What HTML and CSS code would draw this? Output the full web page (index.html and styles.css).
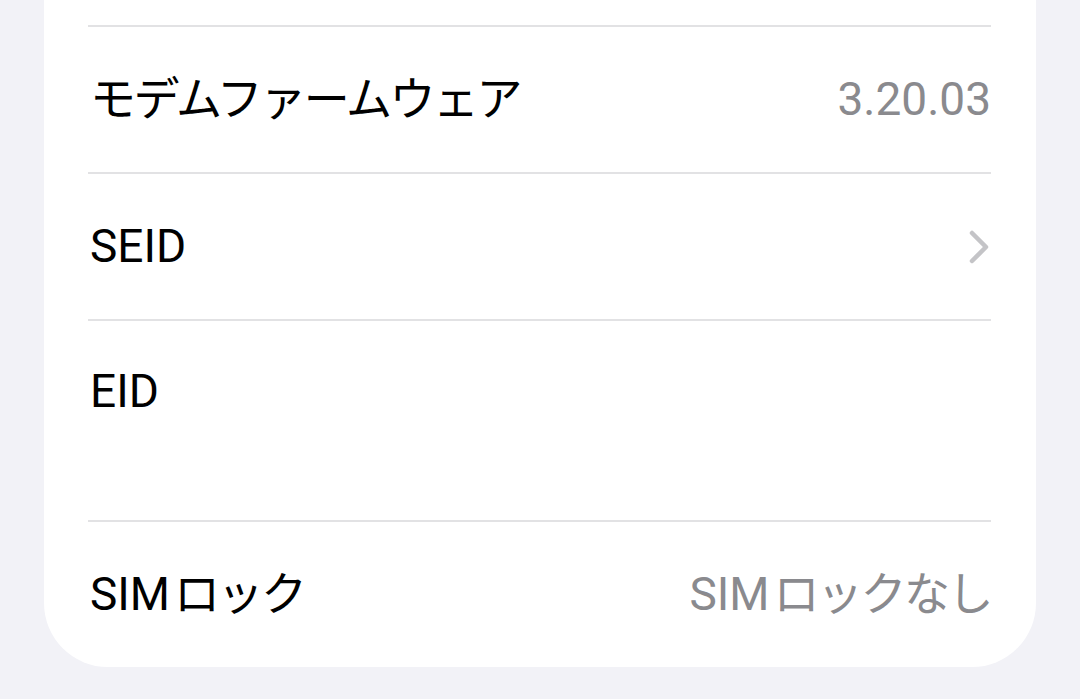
FILE: index.html
```html
<!DOCTYPE html>
<html lang="ja">
<head>
    <meta charset="UTF-8">
    <meta name="viewport" content="width=device-width, initial-scale=1.0">
    <title>情報</title>
    <link rel="stylesheet" href="styles.css">
</head>
<body>
    <div class="card">
        <div class="row">
            <span class="label ja">モデムファームウェア</span>
            <span class="value">3.20.03</span>
        </div>
        <div class="row">
            <span class="label">SEID</span>
            <svg class="chevron" width="22" height="36" viewBox="0 0 22 36">
                <polyline points="4,4 18,18 4,32" fill="none" stroke="currentColor" stroke-width="4.5" stroke-linecap="round" stroke-linejoin="round"/>
            </svg>
        </div>
        <div class="row tall">
            <span class="label">EID</span>
        </div>
        <div class="row">
            <span class="label">SIM<span class="ja gap">ロック</span></span>
            <span class="value">SIM<span class="ja gap">ロックなし</span></span>
        </div>
    </div>
</body>
</html>
```

FILE: styles.css
```css
body {
    margin: 0;
    height: 699px;
    overflow: hidden;
    background-color: #f2f2f7;
    font-family: Roboto, "Noto Sans CJK JP", sans-serif;
    color: #000000;
}

.card {
    margin: 0 44px;
    padding: 25px 45px 0 44px;
    background-color: #ffffff;
    border-radius: 0 0 64px 64px;
}

.row {
    display: flex;
    align-items: center;
    justify-content: space-between;
    height: 145px;
    border-top: 2px solid #e2e2e4;
    font-size: 46px;
    line-height: 1.2;
}

.row.tall {
    align-items: flex-start;
    height: 156px;
    padding-top: 43px;
}

.label {
    padding-left: 2px;
}

.value {
    color: #8a8a8e;
}

.ja {
    letter-spacing: -2.5px;
}

.gap {
    margin-left: 4px;
}

.chevron {
    color: #c4c4c7;
    margin-right: 1px;
}
```
